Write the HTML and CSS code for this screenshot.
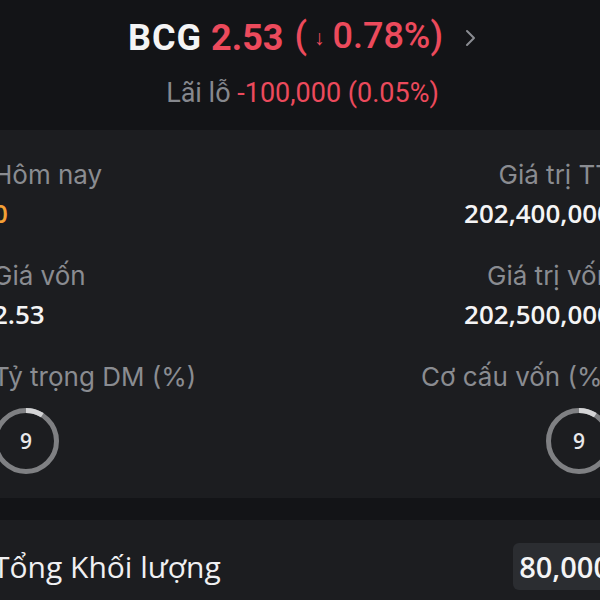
FILE: index.html
```html
<!DOCTYPE html>
<html lang="vi">
<head>
<meta charset="utf-8">
<link rel="stylesheet" href="styles.css">
</head>
<body>
<div class="page">
  <header class="head">
    <div class="title">
      <span class="sym">BCG</span>
      <span class="price">2.53</span>
      <span class="chg">(<span class="arrow">↓</span>0.78%)</span>
      <svg class="chev" width="12" height="20" viewBox="0 0 12 20"><path d="M2 3 L9 10 L2 17" fill="none" stroke="#8a8c92" stroke-width="2" stroke-linecap="round" stroke-linejoin="round"/></svg>
    </div>
    <div class="pl"><span class="pl-label">Lãi lỗ</span> <span class="pl-val">-100,000 (0.05%)</span></div>
  </header>

  <section class="card">
    <div class="grid">
      <div class="item">
        <div class="label">Hôm nay</div>
        <div class="value orange">0</div>
      </div>
      <div class="item right">
        <div class="label">Giá trị TT</div>
        <div class="value">202,400,000</div>
      </div>
      <div class="item">
        <div class="label">Giá vốn</div>
        <div class="value">2.53</div>
      </div>
      <div class="item right">
        <div class="label">Giá trị vốn</div>
        <div class="value">202,500,000</div>
      </div>
      <div class="item">
        <div class="label">Tỷ trọng DM (%)</div>
        <div class="ring">
          <svg width="66" height="66" viewBox="0 0 66 66"><circle cx="33" cy="33" r="30.5" fill="none" stroke="#7f8083" stroke-width="5"/><circle cx="33" cy="33" r="30.5" fill="none" stroke="#d4d4d6" stroke-width="5" stroke-dasharray="17.2 200" transform="rotate(-90 33 33)"/></svg>
          <span class="ring-num">9</span>
        </div>
      </div>
      <div class="item right">
        <div class="label">Cơ cấu vốn (%)</div>
        <div class="ring">
          <svg width="66" height="66" viewBox="0 0 66 66"><circle cx="33" cy="33" r="30.5" fill="none" stroke="#7f8083" stroke-width="5"/><circle cx="33" cy="33" r="30.5" fill="none" stroke="#d4d4d6" stroke-width="5" stroke-dasharray="17.2 200" transform="rotate(-90 33 33)"/></svg>
          <span class="ring-num">9</span>
        </div>
      </div>
    </div>
  </section>

  <section class="card2">
    <div class="row">
      <span class="row-label">Tổng Khối lượng</span>
      <span class="box">80,000</span>
    </div>
  </section>
</div>
</body>
</html>
```

FILE: styles.css
```css
html, body {
  margin: 0;
  padding: 0;
  background: #131417;
  overflow: hidden;
  width: 600px;
  height: 600px;
}
.page {
  margin-left: -7px;
  width: 619px;
  font-family: Inter, "Noto Sans", sans-serif;
}
.head {
  height: 130px;
  display: flex;
  flex-direction: column;
  align-items: center;
  background: #131417;
}
.title {
  margin-top: 16px;
  display: flex;
  align-items: center;
  font-family: Roboto, sans-serif;
  font-weight: 700;
  font-size: 36px;
  line-height: 44px;
  height: 44px;
}
.sym { color: #f4f4f5; letter-spacing: 1px; }
.price { color: #ec4a5c; margin-left: 9px; }
.chg { color: #ec4a5c; margin-left: 11px; font-weight: 500; }
.arrow { font-size: 21px; margin: 0 8px 0 7px; position: relative; top: -3px; font-weight: 700; }
.chev { margin-left: 22px; }
.pl {
  margin-top: 17px;
  font-family: Roboto, sans-serif;
  font-size: 27px;
  line-height: 32px;
}
.pl-label { color: #86888e; }
.pl-val { color: #ec4a5c; }

.card {
  background: #1c1d20;
  height: 368px;
  box-sizing: border-box;
  padding-top: 29px;
}
.grid {
  display: grid;
  grid-template-columns: 1fr 1fr;
  row-gap: 30px;
}
.item { display: flex; flex-direction: column; align-items: flex-start; }
.item.right { align-items: flex-end; }
.label {
  color: #8a8c91;
  font-size: 26px;
  line-height: 32px;
}
.value {
  font-family: "Open Sans", sans-serif;
  color: #f4f4f5;
  font-weight: 600;
  font-size: 26px;
  line-height: 34px;
  margin-top: 5px;
}
.value.orange { color: #f4a035; }
.ring {
  position: relative;
  width: 66px;
  height: 66px;
  margin-top: 15px;
}
.ring svg { display: block; }
.ring-num {
  position: absolute;
  inset: 0;
  display: flex;
  align-items: center;
  justify-content: center;
  font-family: "Open Sans", sans-serif;
  font-weight: 600;
  font-size: 21px;
  color: #e8e8ea;
}
.card2 {
  margin-top: 22px;
  background: #1c1d20;
  height: 100px;
}
.row {
  display: flex;
  justify-content: space-between;
  align-items: center;
  padding-top: 23px;
}
.row-label {
  font-family: "Open Sans", sans-serif;
  color: #f0f0f2;
  font-size: 30px;
  line-height: 47px;
}
.box {
  background: #2b2d31;
  border-radius: 6px;
  font-family: "Open Sans", sans-serif;
  font-weight: 600;
  color: #f4f4f5;
  font-size: 29px;
  line-height: 47px;
  padding: 0 2px 0 6px;
}
```
